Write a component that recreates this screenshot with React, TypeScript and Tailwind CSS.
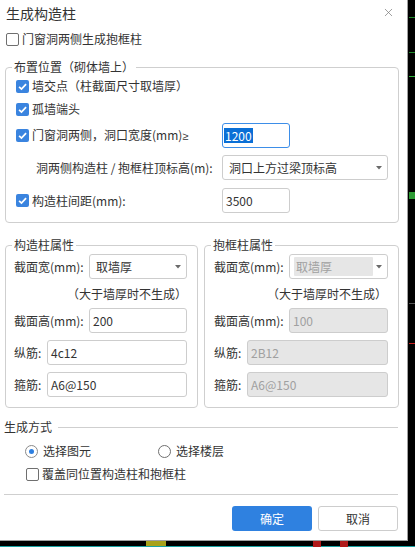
import { X } from 'lucide-react';

function Check({ checked }: { checked?: boolean }) {
  if (checked) {
    return (
      <span className="w-[13px] h-[13px] shrink-0 rounded-[2px] bg-[#3a84df] flex items-center justify-center">
        <svg viewBox="0 0 12 12" className="w-[11px] h-[11px]">
          <path d="M2.3 6.3 4.9 8.8 9.9 3.4" stroke="white" strokeWidth="1.9" fill="none" />
        </svg>
      </span>
    );
  }
  return <span className="w-[13px] h-[13px] shrink-0 rounded-[2px] border border-[#6f6f6f] bg-white" />;
}

function Radio({ checked }: { checked?: boolean }) {
  return (
    <span
      className={`w-[13px] h-[13px] shrink-0 rounded-full border flex items-center justify-center ${
        checked ? 'border-[#8a8a8a]' : 'border-[#6f6f6f]'
      }`}
    >
      {checked && <span className="w-[5px] h-[5px] rounded-full bg-[#2d7fe0]" />}
    </span>
  );
}

function Arrow() {
  return (
    <svg viewBox="0 0 6 4" className="w-[6px] h-[4px] shrink-0">
      <path d="M0 0h6L3 3.5z" fill="#6a6a6a" />
    </svg>
  );
}

function Field({ value, width, disabled }: { value: string; width: string; disabled?: boolean }) {
  return (
    <div
      className={`${width} h-[25px] rounded-[3px] border flex items-center px-[3px] ${
        disabled ? 'bg-[#e6e6e6] border-[#cdcdcd] text-[#a0a0a0]' : 'bg-white border-[#cdcdcd]'
      }`}
    >
      {value}
    </div>
  );
}

function Select({ value, width, disabled }: { value: string; width: string; disabled?: boolean }) {
  return (
    <div className={`${width} h-[25px] rounded-[3px] border border-[#cdcdcd] bg-white flex items-center pr-[5px] ${disabled ? 'pl-[4px]' : 'pl-[6px]'}`}>
      {disabled ? (
        <span className="flex-1 h-[19px] bg-[#e6e6e6] text-[#a0a0a0] flex items-center pl-[2px] mr-[3px] rounded-[1px]">{value}</span>
      ) : (
        <span className="flex-1">{value}</span>
      )}
      <Arrow />
    </div>
  );
}

function PropGroup({ title, disabled, values, widths }: {
  title: string;
  disabled?: boolean;
  values: string[];
  widths: { box: string; sel: string; input: string; pl: string };
}) {
  return (
    <fieldset className={`${widths.box} border border-[#cfcfcf] rounded-[4px] p-0`}>
      <legend className="ml-[6px] px-[2px] leading-[16px]">{title}</legend>
      <div className={`${widths.pl} pb-[10px]`}>
        <div className="mt-[1px] flex items-center">
          <span className="w-[75px]">截面宽(mm):</span>
          <Select value={values[0]} width={widths.sel} disabled={disabled} />
        </div>
        <div className="h-[29px] flex items-center justify-end w-[173px]">（大于墙厚时不生成）</div>
        <div className="flex items-center">
          <span className="w-[75px]">截面高(mm):</span>
          <Field value={values[1]} width={widths.sel} disabled={disabled} />
        </div>
        <div className="mt-[7px] flex items-center">
          <span className="w-[33px]">纵筋:</span>
          <Field value={values[2]} width={widths.input} disabled={disabled} />
        </div>
        <div className="mt-[7px] flex items-center">
          <span className="w-[33px]">箍筋:</span>
          <Field value={values[3]} width={widths.input} disabled={disabled} />
        </div>
      </div>
    </fieldset>
  );
}

export default function App() {
  return (
    <div className="relative w-[415px] h-[547px] bg-black overflow-hidden font-['Noto_Sans_CJK_SC',sans-serif]">
      {/* CAD canvas bits behind the dialog */}
      <div className="absolute left-[409px] top-[17px] w-[6px] h-px bg-[#1f8a2a]" />
      <div className="absolute left-[409px] top-[52px] w-[6px] h-px bg-[#1f8a2a]" />
      <div className="absolute left-[409px] top-[76px] w-[6px] h-px bg-[#2fb43c]" />
      <div className="absolute left-[409px] top-[192px] w-[6px] h-[7px] bg-[#2c9a34]" />
      <div className="absolute left-[409px] top-[303px] w-[6px] h-px bg-[#555]" />
      <div className="absolute left-[409px] top-[343px] w-[6px] h-px bg-[#c81e1e]" />
      <div className="absolute left-[146px] top-[541px] w-[20px] h-[6px] bg-[#a8a21a]" />
      <div className="absolute left-[0px] top-[546px] w-[415px] h-px bg-[#1aa3a3]" />
      <div className="absolute left-[313px] top-[541px] w-[8px] h-[6px] bg-[#b01a1a]" />
      <div className="absolute left-[340px] top-[541px] w-[8px] h-[6px] bg-[#b01a1a]" />

      <div className="relative w-[408px] h-[541px] bg-white border-r border-b border-[#a0a0a0] flex flex-col text-[12px] leading-[16px] text-[#333]">
        <div className="h-[25px] flex items-center justify-between pl-[6px] pr-[12px]">
          <span className="text-[14px] text-[#333]">生成构造柱</span>
          <X className="w-[13px] h-[13px] text-[#777]" strokeWidth={1.3} />
        </div>

        <div className="h-[28px] flex items-center gap-[3px] pl-[6px]">
          <Check />
          <span>门窗洞两侧生成抱框柱</span>
        </div>

        <fieldset className="mt-[6px] ml-[5px] w-[394px] border border-[#cfcfcf] rounded-[4px] p-0">
          <legend className="ml-[6px] px-[2px] leading-[16px]">布置位置（砌体墙上）</legend>
          <div className="pb-[9px]">
            <div className="h-[22px] flex items-center gap-[3px] pl-[10px]">
              <Check checked />
              <span>墙交点（柱截面尺寸取墙厚）</span>
            </div>
            <div className="mt-[1px] h-[22px] flex items-center gap-[3px] pl-[10px]">
              <Check checked />
              <span>孤墙端头</span>
            </div>
            <div className="mt-[3px] flex items-center pl-[10px]">
              <div className="w-[206px] flex items-center gap-[3px]">
                <Check checked />
                <span>
                  门窗洞两侧，洞口宽度(mm)<span className="font-['Noto_Sans',sans-serif] text-[11px]">≥</span>
                </span>
              </div>
              <div className="w-[68px] h-[25px] rounded-[3px] border border-[#3d8ee8] flex items-center px-[1px]">
                <span className="bg-[#0a6fd6] text-white leading-[15px] px-[1px]">1200</span>
              </div>
            </div>
            <div className="mt-[7px] flex items-center pl-[30px]">
              <span className="w-[186px]">洞两侧构造柱 / 抱框柱顶标高(m):</span>
              <Select value="洞口上方过梁顶标高" width="w-[166px]" />
            </div>
            <div className="mt-[8px] flex items-center pl-[10px]">
              <div className="w-[206px] flex items-center gap-[3px]">
                <Check checked />
                <span>构造柱间距(mm):</span>
              </div>
              <Field value="3500" width="w-[68px]" />
            </div>
          </div>
        </fieldset>

        <div className="mt-[14px] ml-[5px] flex gap-[6px]">
          <PropGroup
            title="构造柱属性"
            values={['取墙厚', '200', '4c12', 'A6@150']}
            widths={{ box: 'w-[193px]', sel: 'w-[98px]', input: 'w-[140px]', pl: 'pl-[8px]' }}
          />
          <PropGroup
            title="抱框柱属性"
            disabled
            values={['取墙厚', '100', '2B12', 'A6@150']}
            widths={{ box: 'w-[195px]', sel: 'w-[99px]', input: 'w-[141px]', pl: 'pl-[9px]' }}
          />
        </div>

        <div className="mt-[10px] h-[18px] flex items-center pl-[4px] pr-[9px]">
          <span>生成方式</span>
          <div className="flex-1 h-px bg-[#cfcfcf] ml-[6px]" />
        </div>

        <div className="mt-[5px] h-[20px] flex items-center pl-[25px]">
          <div className="w-[133px] flex items-center gap-[5px]">
            <Radio checked />
            <span>选择图元</span>
          </div>
          <div className="flex items-center gap-[5px]">
            <Radio />
            <span>选择楼层</span>
          </div>
        </div>

        <div className="mt-[3px] h-[20px] flex items-center gap-[3px] pl-[26px]">
          <Check />
          <span>覆盖同位置构造柱和抱框柱</span>
        </div>

        <div className="mt-[10px] ml-[4px] mr-[9px] h-px bg-[#cfcfcf]" />

        <div className="mt-[11px] flex justify-end gap-[6px] pr-[9px]">
          <button className="w-[80px] h-[25px] rounded-[3px] bg-[#2f81e0] text-white text-[12px]">确定</button>
          <button className="w-[80px] h-[25px] rounded-[3px] border border-[#cdcdcd] bg-white text-[#333] text-[12px]">取消</button>
        </div>
      </div>
    </div>
  );
}
